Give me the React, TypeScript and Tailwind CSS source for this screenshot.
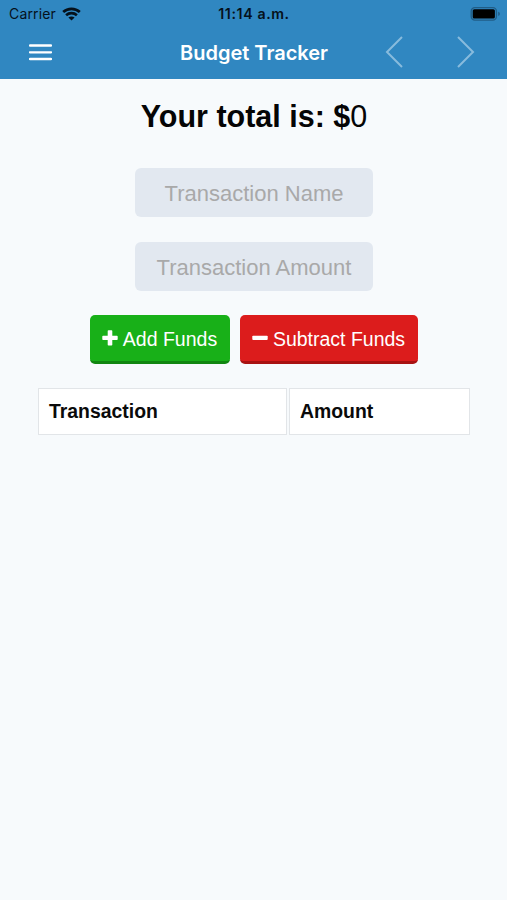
import type { ReactNode } from "react";

const columns = [
  { label: "Transaction", width: "w-[249px]" },
  { label: "Amount", width: "w-[181px]" },
];

function WifiIcon() {
  return (
    <svg viewBox="0 0 19 14" className="w-[19px] h-[14px]" fill="none" stroke="currentColor">
      <path d="M1.2 5C5.8 .8 13.2 .8 17.8 5" strokeWidth="2.8" />
      <path d="M4.1 8.2C7.1 5.4 11.9 5.4 14.9 8.2" strokeWidth="2.6" />
      <path d="M9.5 13.6L6.4 10.6C8 9.2 11 9.2 12.6 10.6Z" fill="currentColor" stroke="none" />
    </svg>
  );
}

function BatteryIcon() {
  return (
    <svg viewBox="0 0 31 14" className="w-[31px] h-[14px]">
      <rect x="1.2" y=".7" width="25.2" height="12.4" rx="3.6" fill="none" stroke="#205d87" strokeWidth="1.3" />
      <rect x="2.7" y="2.2" width="22.2" height="9.4" rx="1.6" fill="#000" />
      <path d="M28.2 4.8C30.4 5.4 30.4 8.4 28.2 9Z" fill="#205d87" />
    </svg>
  );
}

function PlusIcon() {
  return (
    <svg viewBox="0 0 16 16" className="w-[16px] h-[16px] mb-[3px]" fill="currentColor">
      <path d="M6.5 .3H9.5Q10.3 .3 10.3 1.1V5.7H14.9Q15.7 5.7 15.7 6.5V9.2Q15.7 10 14.9 10H10.3V14.8Q10.3 15.6 9.5 15.6H6.5Q5.7 15.6 5.7 14.8V10H1.1Q.3 10 .3 9.2V6.5Q.3 5.7 1.1 5.7H5.7V1.1Q5.7 .3 6.5 .3Z" />
    </svg>
  );
}

function MinusIcon() {
  return (
    <svg viewBox="0 0 16 16" className="w-[16px] h-[16px] mb-[3px]" fill="currentColor">
      <rect x=".3" y="5.7" width="15.4" height="4.3" rx=".9" />
    </svg>
  );
}

function StatusBar() {
  return (
    <div className="grid grid-cols-3 items-center h-[27px] pl-[9px] pr-[6px] text-[#05111b]">
      <div className="flex items-center gap-[6px] text-[14px] tracking-[0.15px]">
        <span>Carrier</span>
        <WifiIcon />
      </div>
      <div className="-ml-[10px] -mr-2 text-center text-[14.2px] font-semibold tracking-[0.6px]">11:14 a.m.</div>
      <div className="flex justify-end">
        <BatteryIcon />
      </div>
    </div>
  );
}

function NavBar() {
  return (
    <div className="flex items-center h-[52px] pl-[29px] pr-[32px] pb-[2px] text-white">
      <svg viewBox="0 0 23 17" className="w-[23px] h-[17px]" stroke="currentColor" strokeWidth="2.3" strokeLinecap="round">
        <path d="M1 1.5H22M1 8.3H22M1 15H22" />
      </svg>
      <h1 className="w-[150px] ml-[127px] pt-px whitespace-nowrap text-center text-[20px] font-semibold">Budget Tracker</h1>
      <div className="flex gap-[54px] ml-auto text-[#88bbdd]">
        <svg viewBox="0 0 18 32" className="w-[18px] h-[32px]" fill="none" stroke="currentColor" strokeWidth="2">
          <path d="M17 1L2 16L17 31" />
        </svg>
        <svg viewBox="0 0 18 32" className="w-[18px] h-[32px]" fill="none" stroke="currentColor" strokeWidth="2">
          <path d="M1 1L16 16L1 31" />
        </svg>
      </div>
    </div>
  );
}

function FundsButton({ className, children }: { className: string; children: ReactNode }) {
  return (
    <button
      type="button"
      className={`flex items-center justify-center gap-[5px] h-[49px] pt-[3px] pr-px rounded-[5px] border-b-[3px] text-[19.5px] text-white whitespace-nowrap ${className}`}
    >
      {children}
    </button>
  );
}

export default function App() {
  const inputClass =
    "block w-[238px] h-[49px] pt-[2px] rounded-[6px] bg-[#e2e8f0] text-center text-[22px] text-black placeholder:text-[#a9a9a9] placeholder:opacity-100";

  return (
    <div className="min-h-screen bg-[#f7fafc] font-['Liberation_Sans',Arial,sans-serif]">
      <header className="h-[79px] bg-[#3087c1] font-['Inter',sans-serif]">
        <StatusBar />
        <NavBar />
      </header>

      <main className="flex flex-col items-center pl-px">
        <h2 className="mt-[19px] h-[36px] text-[30.5px] leading-[36px] font-bold text-[#050505]">
          Your total is: $<span className="font-normal">0</span>
        </h2>

        <div className="flex flex-col gap-[25px] mt-[34px]">
          <input className={inputClass} placeholder="Transaction Name" />
          <input className={inputClass} placeholder="Transaction Amount" />
        </div>

        <div className="flex gap-[10px] mt-[24px]">
          <FundsButton className="w-[140px] bg-[#18b018] border-[#118611]">
            <PlusIcon />
            Add Funds
          </FundsButton>
          <FundsButton className="w-[178px] bg-[#dc1c1c] border-[#a81212]">
            <MinusIcon />
            Subtract Funds
          </FundsButton>
        </div>

        {/* Transactions table, no rows yet */}
        <table className="mt-[22px] border-separate border-spacing-x-[2px] border-spacing-y-[2px]">
          <thead>
            <tr>
              {columns.map((column) => (
                <th
                  key={column.label}
                  className={`${column.width} h-[47px] border border-[#e2e5e8] bg-white px-[10px] text-left text-[19.4px] font-bold text-[#0a0a0a]`}
                >
                  {column.label}
                </th>
              ))}
            </tr>
          </thead>
        </table>
      </main>
    </div>
  );
}
